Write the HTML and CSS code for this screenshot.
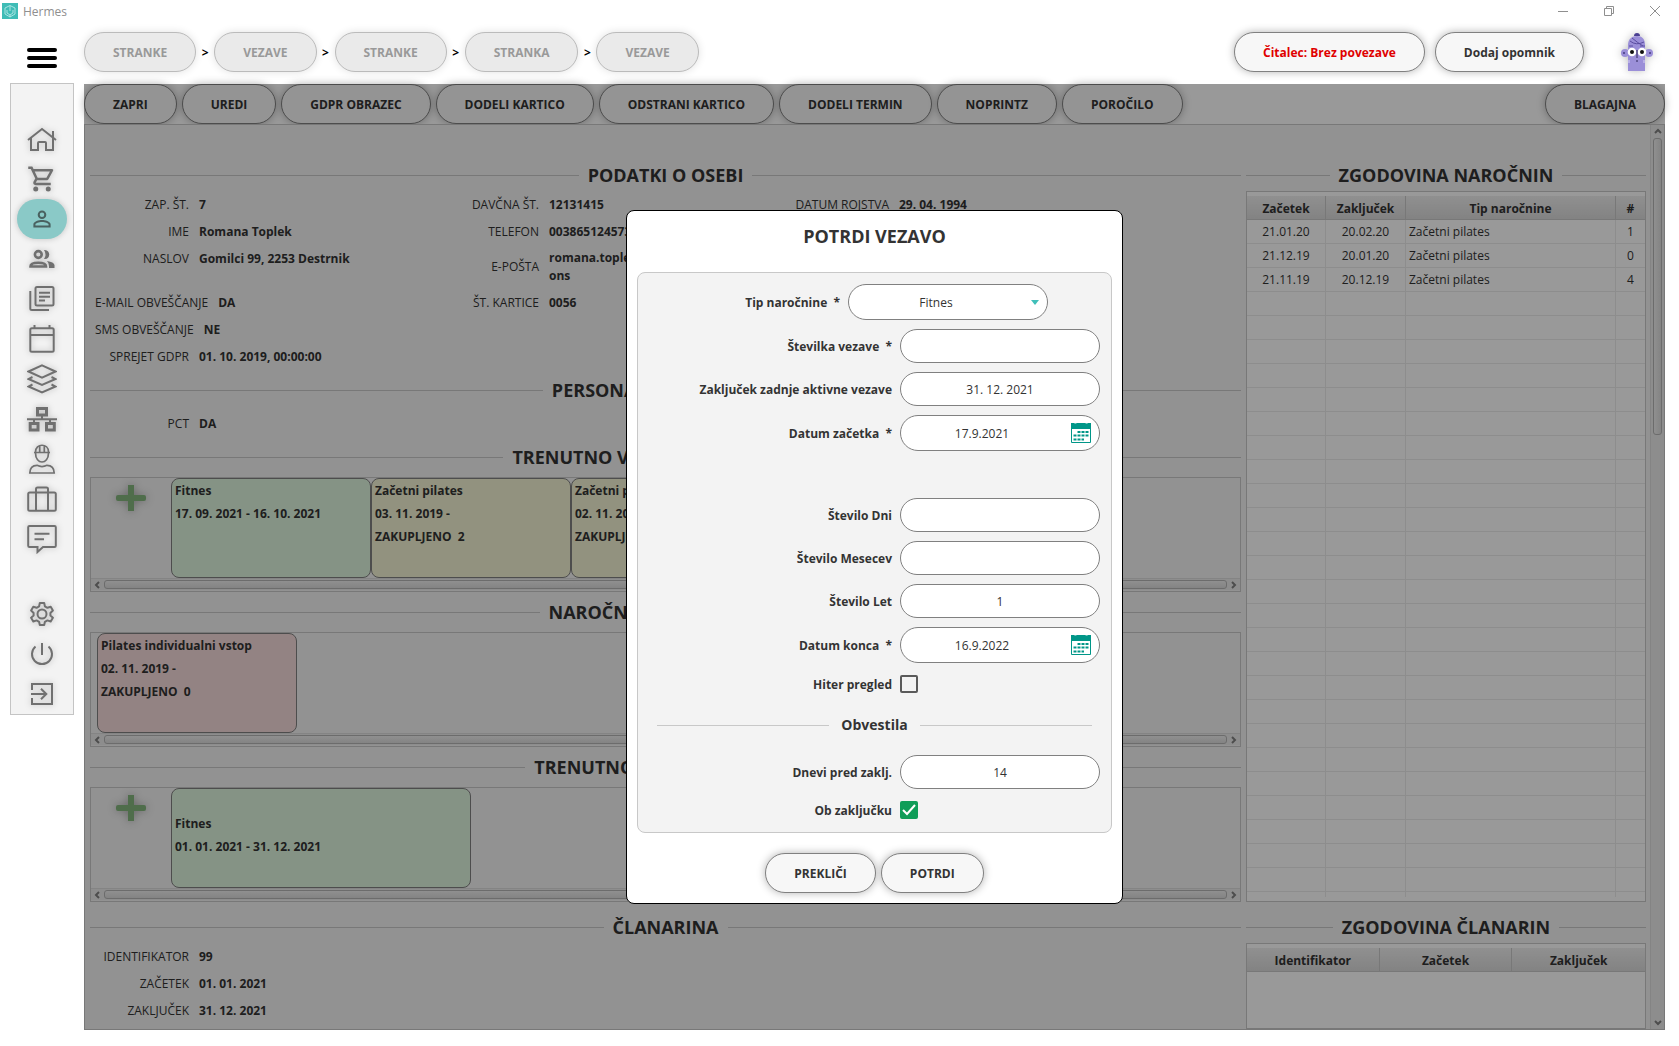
FILE: index.html
```html
<!DOCTYPE html>
<html lang="sl">
<head>
<meta charset="utf-8">
<title>Hermes</title>
<link rel="stylesheet" href="styles.css">
</head>
<body>
<div class="app">
  <header class="titlebar">
    <svg class="app-icon" viewBox="0 0 16 16" aria-hidden="true"><rect width="16" height="16" fill="#3fbcb6"/><g fill="none" stroke="#c5efec" stroke-width=".8"><path d="M8 2.5 13 5v6l-5 3-5-3V5z"/><path d="M8 3v5M5 7v3l3 2 3-2V7M8 12v2"/></g></svg>
    <span class="app-name">Hermes</span>
    <div class="window-controls">
      <button type="button" aria-label="Pomanjšaj"><svg viewBox="0 0 12 12"><path d="M1 6.5h10"/></svg></button>
      <button type="button" aria-label="Obnovi"><svg viewBox="0 0 12 12"><path d="M1.5 3.500h7v7h-7zM3.500 3.500v-2h7v7h-2"/></svg></button>
      <button type="button" aria-label="Zapri okno"><svg viewBox="0 0 12 12"><path d="m1 1 10 10M11 1 1 11"/></svg></button>
    </div>
  </header>

  <div class="topbar">
    <button type="button" class="menu" aria-label="Meni"><svg viewBox="0 0 30 20"><path d="M2 2h26M2 10h26M2 18h26"/></svg></button>
    <nav class="crumbs">
      <button type="button" class="pill" disabled>STRANKE</button><span>&gt;</span>
      <button type="button" class="pill" disabled>VEZAVE</button><span>&gt;</span>
      <button type="button" class="pill" disabled>STRANKE</button><span>&gt;</span>
      <button type="button" class="pill" disabled>STRANKA</button><span>&gt;</span>
      <button type="button" class="pill" disabled>VEZAVE</button>
    </nav>
    <div class="top-actions">
      <button type="button" class="pill pill-alert">Čitalec: Brez povezave</button>
      <button type="button" class="pill">Dodaj opomnik</button>
    </div>
    <svg class="avatar" viewBox="0 0 32 38" aria-hidden="true">
      <g fill="#9b8fd8"><circle cx="4" cy="20" r="4"/><circle cx="28" cy="20" r="4"/><path d="M7 38V12C7 6 11 3 16 3s8 3 8 9v26z"/></g>
      <path d="M13 3q0-3 3-3t3 3z" fill="#4b3f91"/>
      <g fill="none" stroke="#5a4da0" stroke-width="1"><path d="M9 8q6 5 14 1M11 5q6 5 11 8M8 13h4M19 13h5"/></g>
      <circle cx="3" cy="20" r="1" fill="#443a80"/><circle cx="29" cy="20" r="1" fill="#443a80"/>
      <circle cx="11" cy="19" r="4.300" fill="#fff"/><circle cx="21" cy="19" r="4.300" fill="#fff"/>
      <circle cx="11" cy="19" r="2" fill="#111"/><circle cx="21" cy="19" r="2" fill="#111"/>
      <path d="M16 17v8M15 28h2" stroke="#2c2556" fill="none"/>
      <path d="M8 27v3M23 27v3" stroke="#d5cff5" fill="none"/>
    </svg>
  </div>

  <nav class="sidebar">
    <a href="#" aria-label="Domov"><svg viewBox="0 0 30 30"><path d="M1 16 15 5l14 11M4 14v12h7v-7q0-1 1-1h6q1 0 1 1v7h7V14M26 7v7"/></svg></a>
    <a href="#" aria-label="Prodaja"><svg viewBox="0 0 24 24" class="solid"><path d="M15.550 13c.75 0 1.410-.41 1.750-1.030l3.580-6.490A1 1 0 0 0 20.010 4H5.210l-.94-2H1v2h2l3.600 7.590-1.350 2.440C4.520 15.370 5.480 17 7 17h12v-2H7l1.100-2h7.450zM6.160 6h12.150l-2.760 5H8.530zM7 18a2 2 0 1 0 0 4 2 2 0 0 0 0-4zm10 0a2 2 0 1 0 0 4 2 2 0 0 0 0-4z"/></svg></a>
    <a href="#" aria-label="Stranka" class="active"><svg viewBox="-1 -1 26 26" class="solid"><path d="M12 5.900a2.100 2.100 0 1 1 0 4.200 2.100 2.100 0 0 1 0-4.200m0 9c2.970 0 6.100 1.460 6.100 2.100v1.100H5.900V17c0-.64 3.130-2.100 6.100-2.100M12 4a4 4 0 1 0 0 8 4 4 0 0 0 0-8zm0 9c-2.670 0-8 1.340-8 4v3h16v-3c0-2.660-5.330-4-8-4z"/></svg></a>
    <a href="#" aria-label="Stranke"><svg viewBox="0 0 30 30"><g stroke-width="2.600"><circle cx="11.300" cy="10.500" r="3.400"/><path d="M3.500 22.500c0-5 15.500-5 15.500 0z"/></g><path class="fill" d="M17 6c7-1 7 10 0 9q3-4.500 0-9zM20 17q7 1 7.500 4v3H22v-2q0-3-2-5z"/></svg></a>
    <a href="#" aria-label="Dokumenti"><svg viewBox="0 0 30 30"><rect x="8.500" y="3" width="18" height="18.500" rx="1.500"/><path d="M3.300 7v17.500q0 1.500 1.500 1.500H22M12 8.700h11M12 12.700h11M12 16.500h6"/></svg></a>
    <a href="#" aria-label="Koledar"><svg viewBox="0 0 30 30"><rect x="3.300" y="4.300" width="23.400" height="23.400" rx="1.500"/><path d="M3 11h24M7.500 1v4M22.500 1v4"/></svg></a>
    <a href="#" aria-label="Sloji"><svg viewBox="0 0 30 30"><path d="m15 1.300 13.500 6.200L15 13.700 1.500 7.500zM5.500 13l-4 2L15 21l13.500-6-4-2M5.500 20.500l-4 2 13.500 6 13.500-6-4-2"/></svg></a>
    <a href="#" aria-label="Struktura"><svg viewBox="0 0 30 30"><path d="M10.500 4.500h9v6.500h-9zM3.200 19.500H11V26H3.200zM19.500 19.500h7.800V26h-7.800z" stroke-width="3"/><path d="M0 15.200h30M15 12v3M7 15v4M23 15v4"/></svg></a>
    <a href="#" aria-label="Zaposleni"><svg viewBox="0 0 30 30"><g stroke-width="1.700"><path d="M8.500 9c0 12 13 12 13 0M7 8.500h16M8.500 8C8.500-1 21.500-1 21.500 8M12.700 8V2M17.300 8V2M10 21.300q5 2.500 10 0 7 0 7.200 7.700H2.800q.2-7.700 7.200-7.700z"/></g></svg></a>
    <a href="#" aria-label="Posel"><svg viewBox="0 0 30 30"><rect x="1.200" y="8.500" width="27.600" height="18.300" rx="1.500"/><path d="M9 27V5q0-1.500 1.500-1.500h9Q21 3.500 21 5v22"/></svg></a>
    <a href="#" aria-label="Sporočila"><svg viewBox="0 0 30 30"><path d="M2.500 2h25q1.300 0 1.300 1.300v18.400q0 1.300-1.300 1.300H16l-5.500 5V23h-8q-1.300 0-1.300-1.300V3.300Q1.200 2 2.500 2zM7.500 9.700H22.500M7.500 15.200H17"/></svg></a>
    <a href="#" aria-label="Nastavitve" class="apart"><svg viewBox="0 0 30 30"><circle cx="15" cy="15" r="4.500"/><path stroke-linejoin="round" d="M12.800 4h4.400l.7 3.400 2.500 1.400 3.300-1.100 2.200 3.800L23.400 14v2.500l2.500 2.200-2.200 3.800-3.300-1.100-2.500 1.400-.7 3.200h-4.400l-.7-3.200-2.500-1.400-3.300 1.100-2.200-3.800 2.500-2.200V14l-2.500-2.500 2.200-3.800 3.300 1.100 2.500-1.400z"/></svg></a>
    <a href="#" aria-label="Izklop"><svg viewBox="0 0 30 30"><path d="M15 4v12M8.500 7.500a10 10 0 1 0 13 0"/></svg></a>
    <a href="#" aria-label="Odjava"><svg viewBox="0 0 30 30"><path d="M5 11V5h20v20H5v-6M4 15h15M14 9.700l5.300 5.300-5.300 5.300"/></svg></a>
  </nav>

  <main class="main">
    <div class="toolbar">
      <button type="button" class="pill">ZAPRI</button>
      <button type="button" class="pill">UREDI</button>
      <button type="button" class="pill">GDPR OBRAZEC</button>
      <button type="button" class="pill">DODELI KARTICO</button>
      <button type="button" class="pill">ODSTRANI KARTICO</button>
      <button type="button" class="pill">DODELI TERMIN</button>
      <button type="button" class="pill">NOPRINTZ</button>
      <button type="button" class="pill">POROČILO</button>
      <button type="button" class="pill push">BLAGAJNA</button>
    </div>

    <div class="content">
      <div class="person">
        <h2 class="heading">PODATKI O OSEBI</h2>
        <div class="fields columns">
          <dl>
            <div><dt>ZAP. ŠT.</dt><dd>7</dd></div>
            <div><dt>IME</dt><dd>Romana Toplek</dd></div>
            <div class="tall top"><dt>NASLOV</dt><dd>Gomilci 99, 2253 Destrnik</dd></div>
            <div><dt>E-MAIL OBVEŠČANJE</dt><dd>DA</dd></div>
            <div><dt>SMS OBVEŠČANJE</dt><dd>NE</dd></div>
            <div><dt>SPREJET GDPR</dt><dd>01. 10. 2019, 00:00:00</dd></div>
          </dl>
          <dl>
            <div><dt>DAVČNA ŠT.</dt><dd>12131415</dd></div>
            <div><dt>TELEFON</dt><dd>0038651245733</dd></div>
            <div class="tall"><dt>E-POŠTA</dt><dd>romana.toplek@<br>ons</dd></div>
            <div><dt>ŠT. KARTICE</dt><dd>0056</dd></div>
          </dl>
          <dl>
            <div><dt>DATUM ROJSTVA</dt><dd>29. 04. 1994</dd></div>
          </dl>
        </div>

        <h2 class="heading">PERSONALIZIRANA POLJA</h2>
        <dl class="fields single">
          <div><dt>PCT</dt><dd>DA</dd></div>
        </dl>

        <h2 class="heading">TRENUTNO VELJAVNE NAROČNINE</h2>
        <section class="strip">
          <div class="cards">
            <button type="button" class="add" aria-label="Dodaj naročnino"><svg viewBox="0 0 30 26"><path d="M2 10h10V0h6v10h10q2 0 2 2v2q0 2-2 2H18v10h-6V16H2q-2 0-2-2v-2q0-2 2-2z"/></svg></button>
            <article class="card green"><p>Fitnes</p><p>17. 09. 2021 - 16. 10. 2021</p></article>
            <article class="card yellow"><p>Začetni pilates</p><p>03. 11. 2019 -</p><p>ZAKUPLJENO&nbsp; 2</p></article>
            <article class="card yellow"><p>Začetni pilates</p><p>02. 11. 2019 -</p><p>ZAKUPLJENO&nbsp; 0</p></article>
          </div>
          <div class="hbar"><svg viewBox="0 0 6 8"><path d="M5 1 2 4l3 3"/></svg><i></i><svg viewBox="0 0 6 8"><path d="m1 1 3 3-3 3"/></svg></div>
        </section>

        <h2 class="heading">NAROČNINE BREZ VSTOPA</h2>
        <section class="strip">
          <div class="cards inset">
            <article class="card red"><p>Pilates individualni vstop</p><p>02. 11. 2019 -</p><p>ZAKUPLJENO&nbsp; 0</p></article>
          </div>
          <div class="hbar"><svg viewBox="0 0 6 8"><path d="M5 1 2 4l3 3"/></svg><i></i><svg viewBox="0 0 6 8"><path d="m1 1 3 3-3 3"/></svg></div>
        </section>

        <h2 class="heading">TRENUTNO VELJAVNE VEZAVE</h2>
        <section class="strip">
          <div class="cards">
            <button type="button" class="add" aria-label="Dodaj vezavo"><svg viewBox="0 0 30 26"><path d="M2 10h10V0h6v10h10q2 0 2 2v2q0 2-2 2H18v10h-6V16H2q-2 0-2-2v-2q0-2 2-2z"/></svg></button>
            <article class="card green wide"><p>Fitnes</p><p>01. 01. 2021 - 31. 12. 2021</p></article>
          </div>
          <div class="hbar"><svg viewBox="0 0 6 8"><path d="M5 1 2 4l3 3"/></svg><i></i><svg viewBox="0 0 6 8"><path d="m1 1 3 3-3 3"/></svg></div>
        </section>

        <h2 class="heading membership">ČLANARINA</h2>
        <dl class="fields">
          <div><dt>IDENTIFIKATOR</dt><dd>99</dd></div>
          <div><dt>ZAČETEK</dt><dd>01. 01. 2021</dd></div>
          <div><dt>ZAKLJUČEK</dt><dd>31. 12. 2021</dd></div>
        </dl>
      </div>

      <div class="history">
        <h2 class="heading">ZGODOVINA NAROČNIN</h2>
        <div class="grid-box">
          <table class="subscriptions">
            <colgroup><col class="c-date"><col class="c-end"><col><col class="c-num"></colgroup>
            <thead><tr><th>Začetek</th><th>Zaključek</th><th>Tip naročnine</th><th>#</th></tr></thead>
            <tbody>
              <tr><td>21.01.20</td><td>20.02.20</td><td>Začetni pilates</td><td>1</td></tr>
              <tr><td>21.12.19</td><td>20.01.20</td><td>Začetni pilates</td><td>0</td></tr>
              <tr><td>21.11.19</td><td>20.12.19</td><td>Začetni pilates</td><td>4</td></tr>
            </tbody>
          </table>
          <div class="empty-rows"></div>
        </div>
        <h2 class="heading membership">ZGODOVINA ČLANARIN</h2>
        <div class="grid-box last">
          <table>
            <thead><tr><th>Identifikator</th><th>Začetek</th><th>Zaključek</th></tr></thead>
          </table>
        </div>
      </div>

      <div class="vbar"><svg viewBox="0 0 8 6"><path d="m1 5 3-3 3 3"/></svg><i></i><svg viewBox="0 0 8 6"><path d="m1 1 3 3 3-3"/></svg></div>
    </div>

    <div class="overlay">
      <form class="modal" role="dialog" aria-labelledby="modal-title">
        <h1 id="modal-title">POTRDI VEZAVO</h1>
        <div class="panel">
          <div class="row type-row">
            <label for="tip">Tip naročnine&nbsp; *</label>
            <div class="control">
              <select id="tip"><option>Fitnes</option></select>
              <svg class="caret" viewBox="0 0 8 5" aria-hidden="true"><path d="M0 0h8L4 5z"/></svg>
            </div>
          </div>
          <div class="row"><label for="st">Številka vezave&nbsp; *</label><input id="st" type="text"></div>
          <div class="row"><label for="zadnja">Zaključek zadnje aktivne vezave</label><input id="zadnja" type="text" value="31. 12. 2021"></div>
          <div class="row">
            <label for="od">Datum začetka&nbsp; *</label>
            <div class="control"><input id="od" class="date" type="text" value="17.9.2021"><button type="button" class="cal" aria-label="Izberi datum začetka"><svg viewBox="0 0 20 20"><path class="frame" d="M.5 1h19v18.500H.5z"/><path class="head" d="M0 0h3q1 2 3 0h8q2 2 3 0h3v6H0z"/><path class="days" d="M6.500 9H18M2.500 12.500H18M2.500 16.500H13"/></svg></button></div>
          </div>
          <div class="row after-gap"><label for="dni">Število Dni</label><input id="dni" type="text"></div>
          <div class="row"><label for="mes">Število Mesecev</label><input id="mes" type="text"></div>
          <div class="row"><label for="let">Število Let</label><input id="let" type="text" value="1"></div>
          <div class="row">
            <label for="do">Datum konca&nbsp; *</label>
            <div class="control"><input id="do" class="date" type="text" value="16.9.2022"><button type="button" class="cal" aria-label="Izberi datum konca"><svg viewBox="0 0 20 20"><path class="frame" d="M.5 1h19v18.500H.5z"/><path class="head" d="M0 0h3q1 2 3 0h8q2 2 3 0h3v6H0z"/><path class="days" d="M6.500 9H18M2.500 12.500H18M2.500 16.500H13"/></svg></button></div>
          </div>
          <div class="row check"><label for="hiter">Hiter pregled</label><div class="control"><input id="hiter" type="checkbox"></div></div>
          <h3>Obvestila</h3>
          <div class="row"><label for="dnevi">Dnevi pred zaklj.</label><input id="dnevi" type="text" value="14"></div>
          <div class="row check"><label for="ob">Ob zaključku</label><div class="control"><input id="ob" type="checkbox" checked><svg class="tick" viewBox="0 0 18 18" aria-hidden="true"><path d="m3 9 4 4 8-9"/></svg></div></div>
        </div>
        <div class="modal-actions">
          <button type="button" class="pill">PREKLIČI</button>
          <button type="submit" class="pill">POTRDI</button>
        </div>
      </form>
    </div>
  </main>
</div>
</body>
</html>
```
FILE: styles.css
```css
* { box-sizing: border-box; }

body {
  margin: 0;
  background: #fff;
  color: #333;
  font: 400 12px/18px "Open Sans", "Noto Sans", sans-serif;
}

h1, h2, h3, p, dl, dd { margin: 0; }

button, input, select { font: inherit; color: inherit; }

button {
  padding: 0;
  border: 0;
  background: none;
  cursor: pointer;
}

svg { display: block; }

.app {
  display: grid;
  grid-template: 22px 62px minmax(0, 1fr) / 84px minmax(0, 1fr);
  height: 100vh;
  padding: 0 14px 16px 0;
}

/* Title bar */
.titlebar {
  grid-column: 1 / -1;
  display: flex;
  align-items: center;
  gap: 5px;
  padding-left: 2px;
  color: #8f8f8f;
}

.app-name { padding-top: 2px; }

.app-icon { width: 16px; height: 16px; }

.window-controls {
  display: flex;
  gap: 34px;
  margin-left: auto;
  padding-right: 4px;
}

.window-controls svg {
  width: 12px;
  height: 12px;
  fill: none;
  stroke: #8f8f8f;
}

/* Top bar */
.topbar {
  grid-column: 1 / -1;
  display: flex;
  align-items: center;
  padding: 0 12px 2px 27px;
}

.menu { margin: 12px 27px 0 0; }

.menu svg {
  width: 30px;
  height: 20px;
  stroke: #000;
  stroke-width: 4;
  stroke-linecap: round;
}

.crumbs {
  display: flex;
  align-items: center;
}

.crumbs span {
  width: 18px;
  padding-top: 2px;
  text-align: center;
  font-weight: 700;
  color: #000;
}

.top-actions {
  display: flex;
  gap: 10px;
  margin: 0 37px 0 auto;
}

.avatar {
  width: 32px;
  height: 38px;
  filter: drop-shadow(0 0 4px rgba(0, 0, 0, .25));
}

.pill {
  height: 40px;
  padding: 2px 28px 0;
  border: 1px solid #808080;
  border-radius: 20px;
  background: #f7f7f7;
  box-shadow: 0 0 8px rgba(0, 0, 0, .3);
  font-weight: 700;
  white-space: nowrap;
}

.pill:disabled {
  border-color: #bbb;
  background: #eaeaea;
  box-shadow: 0 0 8px rgba(0, 0, 0, .12);
  color: #999;
}

.pill-alert { color: #e00000; }

/* Sidebar */
.sidebar {
  align-self: start;
  display: flex;
  flex-direction: column;
  align-items: center;
  margin: -1px 10px 0;
  padding: 35px 0 0;
  height: 632px;
  border: 1px solid #c4c4c4;
  background: #f3f3f3;
}

.sidebar a {
  display: grid;
  place-items: center;
  width: 50px;
  height: 40px;
  border-radius: 20px;
}

.sidebar .apart { margin-top: 35px; }

.sidebar .active {
  background: #8ac9c7;
  box-shadow: 0 0 6px rgba(0, 0, 0, .2);
}

.sidebar svg {
  width: 30px;
  height: 30px;
  fill: none;
  stroke: #707070;
  stroke-width: 2;
  filter: drop-shadow(0 0 3px rgba(0, 0, 0, .25));
}

.sidebar .solid,
.sidebar .fill { fill: #707070; stroke: none; }

.sidebar .active svg {
  width: 28px;
  height: 28px;
  fill: #496160;
  filter: none;
}

/* Main area */
.main {
  position: relative;
  display: flex;
  flex-direction: column;
  min-height: 0;
}

.toolbar {
  display: flex;
  gap: 5px;
}

.push { margin-left: auto; }

.content {
  flex: 1;
  display: flex;
  min-height: 0;
  overflow: hidden;
  border: 1px solid #c8c8c8;
  background: #f3f3f3;
}

.person {
  flex: 1;
  min-width: 0;
  padding: 38px 5px 0;
}

.history {
  display: flex;
  flex-direction: column;
  width: 400px;
  padding-top: 38px;
}

.heading {
  display: flex;
  align-items: center;
  gap: 9px;
  font-size: 18px;
  line-height: 24px;
  font-weight: 700;
  white-space: nowrap;
}

.heading::before,
.heading::after {
  content: "";
  flex: 1;
  height: 1px;
  background: #c8c8c8;
}

.membership { margin-top: 13px; }

.fields { padding: 4px 0 8px 5px; }

.fields.single { padding-top: 8px; }

.columns { display: flex; }

.columns dl { width: 350px; }

.fields dl > div,
dl.fields > div {
  display: flex;
  align-items: center;
  gap: 10px;
  height: 27px;
  white-space: nowrap;
}

.fields dl > .tall { height: 44px; }

.fields dl > .top { align-items: flex-start; padding-top: 5px; }

dt {
  flex: none;
  min-width: 94px;
  text-align: right;
}

dd { font-weight: 700; }

.strip {
  height: 115px;
  margin: 8px 0;
  border: 1px solid #c8c8c8;
}

.cards {
  display: flex;
  height: 100px;
  overflow: hidden;
}

.cards.inset { padding-left: 6px; }

.add {
  flex: none;
  align-self: flex-start;
  width: 80px;
  padding: 7px 25px;
}

.add svg {
  width: 30px;
  height: 26px;
  fill: #84b67d;
  filter: drop-shadow(0 0 4px rgba(0, 0, 0, .3));
}

.card {
  flex: none;
  width: 200px;
  padding: 0 3px;
  border: 1px solid #808080;
  border-radius: 8px;
  font-weight: 700;
  line-height: 23px;
}

.card.wide {
  display: flex;
  flex-direction: column;
  justify-content: center;
  width: 300px;
  padding-bottom: 6px;
}

.green { background: #def5de; }
.yellow { background: #f4f4d4; }
.red { background: #f5dbda; }

.hbar {
  display: flex;
  align-items: center;
  gap: 4px;
  height: 12px;
  padding: 0 3px;
  border-top: 1px solid #dcdcdc;
  background: #ececec;
}

.hbar i {
  flex: 1;
  height: 9px;
  border: 1px solid #b4b4b4;
  border-radius: 3px;
  background: linear-gradient(#efefef, #dcdcdc);
}

.hbar svg {
  width: 6px;
  height: 8px;
  fill: none;
  stroke: #808080;
  stroke-width: 2;
}

.vbar {
  display: flex;
  flex-direction: column;
  align-items: center;
  gap: 4px;
  width: 14px;
  margin-left: 4px;
  padding: 3px 0;
  border-left: 1px solid #dcdcdc;
  background: #ececec;
}

.vbar i {
  width: 9px;
  height: 297px;
  border: 1px solid #b4b4b4;
  border-radius: 3px;
  background: linear-gradient(to right, #efefef, #dcdcdc);
}

.vbar svg {
  width: 8px;
  height: 6px;
  fill: none;
  stroke: #808080;
  stroke-width: 2;
}

.vbar svg:last-child { margin-top: auto; }

/* Tables */
.grid-box {
  flex: none;
  display: flex;
  flex-direction: column;
  height: 711px;
  margin-top: 4px;
  padding: 4px 0;
  border: 1px solid #c8c8c8;
  background: #fff;
}

.grid-box.last { flex: 1 0 0; }

table {
  width: 100%;
  border-collapse: separate;
  border-spacing: 0;
  table-layout: fixed;
}

.c-date { width: 79px; }
.c-end { width: 80px; }
.c-num { width: 29px; }

th {
  height: 24px;
  padding: 2px 0 0;
  border-right: 1px solid #c8c8c8;
  border-bottom: 1px solid #c8c8c8;
  background: linear-gradient(#f0f0f0, #dadada);
  font-weight: 700;
}

td {
  height: 24px;
  padding: 0;
  border-right: 1px solid #ebebeb;
  border-bottom: 1px solid #ebebeb;
  text-align: center;
}

td:nth-child(3) { padding-left: 3px; text-align: left; }

th:last-child, td:last-child { border-right: 0; }

.empty-rows {
  flex: 1;
  background:
    linear-gradient(#ebebeb, #ebebeb) 78px 0 / 1px 100% no-repeat,
    linear-gradient(#ebebeb, #ebebeb) 158px 0 / 1px 100% no-repeat,
    linear-gradient(#ebebeb, #ebebeb) 368px 0 / 1px 100% no-repeat,
    repeating-linear-gradient(#fff 0 23px, #ebebeb 23px 24px);
}

/* Confirmation dialog */
.overlay {
  position: absolute;
  inset: 0;
  display: flex;
  align-items: center;
  justify-content: center;
  background: rgba(0, 0, 0, .4);
}

.modal {
  width: 497px;
  padding: 13px 10px 10px;
  border: 1px solid #000;
  border-radius: 8px;
  background: #fff;
}

.modal h1 {
  font-size: 18px;
  line-height: 24px;
  font-weight: 700;
  text-align: center;
}

.panel {
  display: flex;
  flex-direction: column;
  gap: 9px;
  margin-top: 24px;
  padding: 11px 11px 10px;
  border: 1px solid #c8c8c8;
  border-radius: 8px;
  background: #f3f3f3;
}

.row {
  display: grid;
  grid-template-columns: 1fr 200px;
  align-items: center;
  gap: 8px;
}

.type-row { padding-right: 52px; }

.row label {
  padding-top: 2px;
  font-weight: 700;
  text-align: right;
}

.control { position: relative; }

.row input[type="text"],
.row select {
  display: block;
  width: 200px;
  height: 34px;
  padding: 0 16px;
  border: 1px solid #808080;
  border-radius: 17px;
  background: #fff;
  text-align: center;
}

.row select {
  height: 36px;
  padding: 2px 40px 0 16px;
  appearance: none;
  text-align-last: center;
  border-radius: 18px;
}

.row input.date {
  height: 36px;
  padding: 0 44px 0 8px;
  border-radius: 18px;
}

.caret {
  position: absolute;
  top: 16px;
  right: 9px;
  width: 8px;
  height: 5px;
  fill: #40bfb9;
}

.cal {
  position: absolute;
  top: 8px;
  right: 9px;
}

.cal svg { width: 20px; height: 20px; }
.cal .frame { fill: #fff; stroke: #009688; }
.cal .head { fill: #009688; }
.cal .days { fill: none; stroke: #009688; stroke-width: 2; stroke-dasharray: 3 1; }

.after-gap { margin-top: 38px; }

.check { height: 24px; }

.check input {
  display: block;
  width: 18px;
  height: 18px;
  margin: 0;
  appearance: none;
  border: 2px solid #5a5a5a;
  border-radius: 2px;
}

.check input:checked {
  border-color: #0f9d58;
  background: #0f9d58;
}

.tick {
  position: absolute;
  top: 0;
  left: 0;
  width: 18px;
  height: 18px;
  fill: none;
  stroke: #fff;
  stroke-width: 2;
  pointer-events: none;
}

.panel h3 {
  display: flex;
  align-items: center;
  gap: 12px;
  margin: 10px 8px 11px;
  font-size: 14px;
  line-height: 20px;
  font-weight: 700;
}

.panel h3::before,
.panel h3::after {
  content: "";
  flex: 1;
  height: 1px;
  background: #c8c8c8;
}

.modal-actions {
  display: flex;
  justify-content: center;
  gap: 5px;
  margin-top: 20px;
}
```
